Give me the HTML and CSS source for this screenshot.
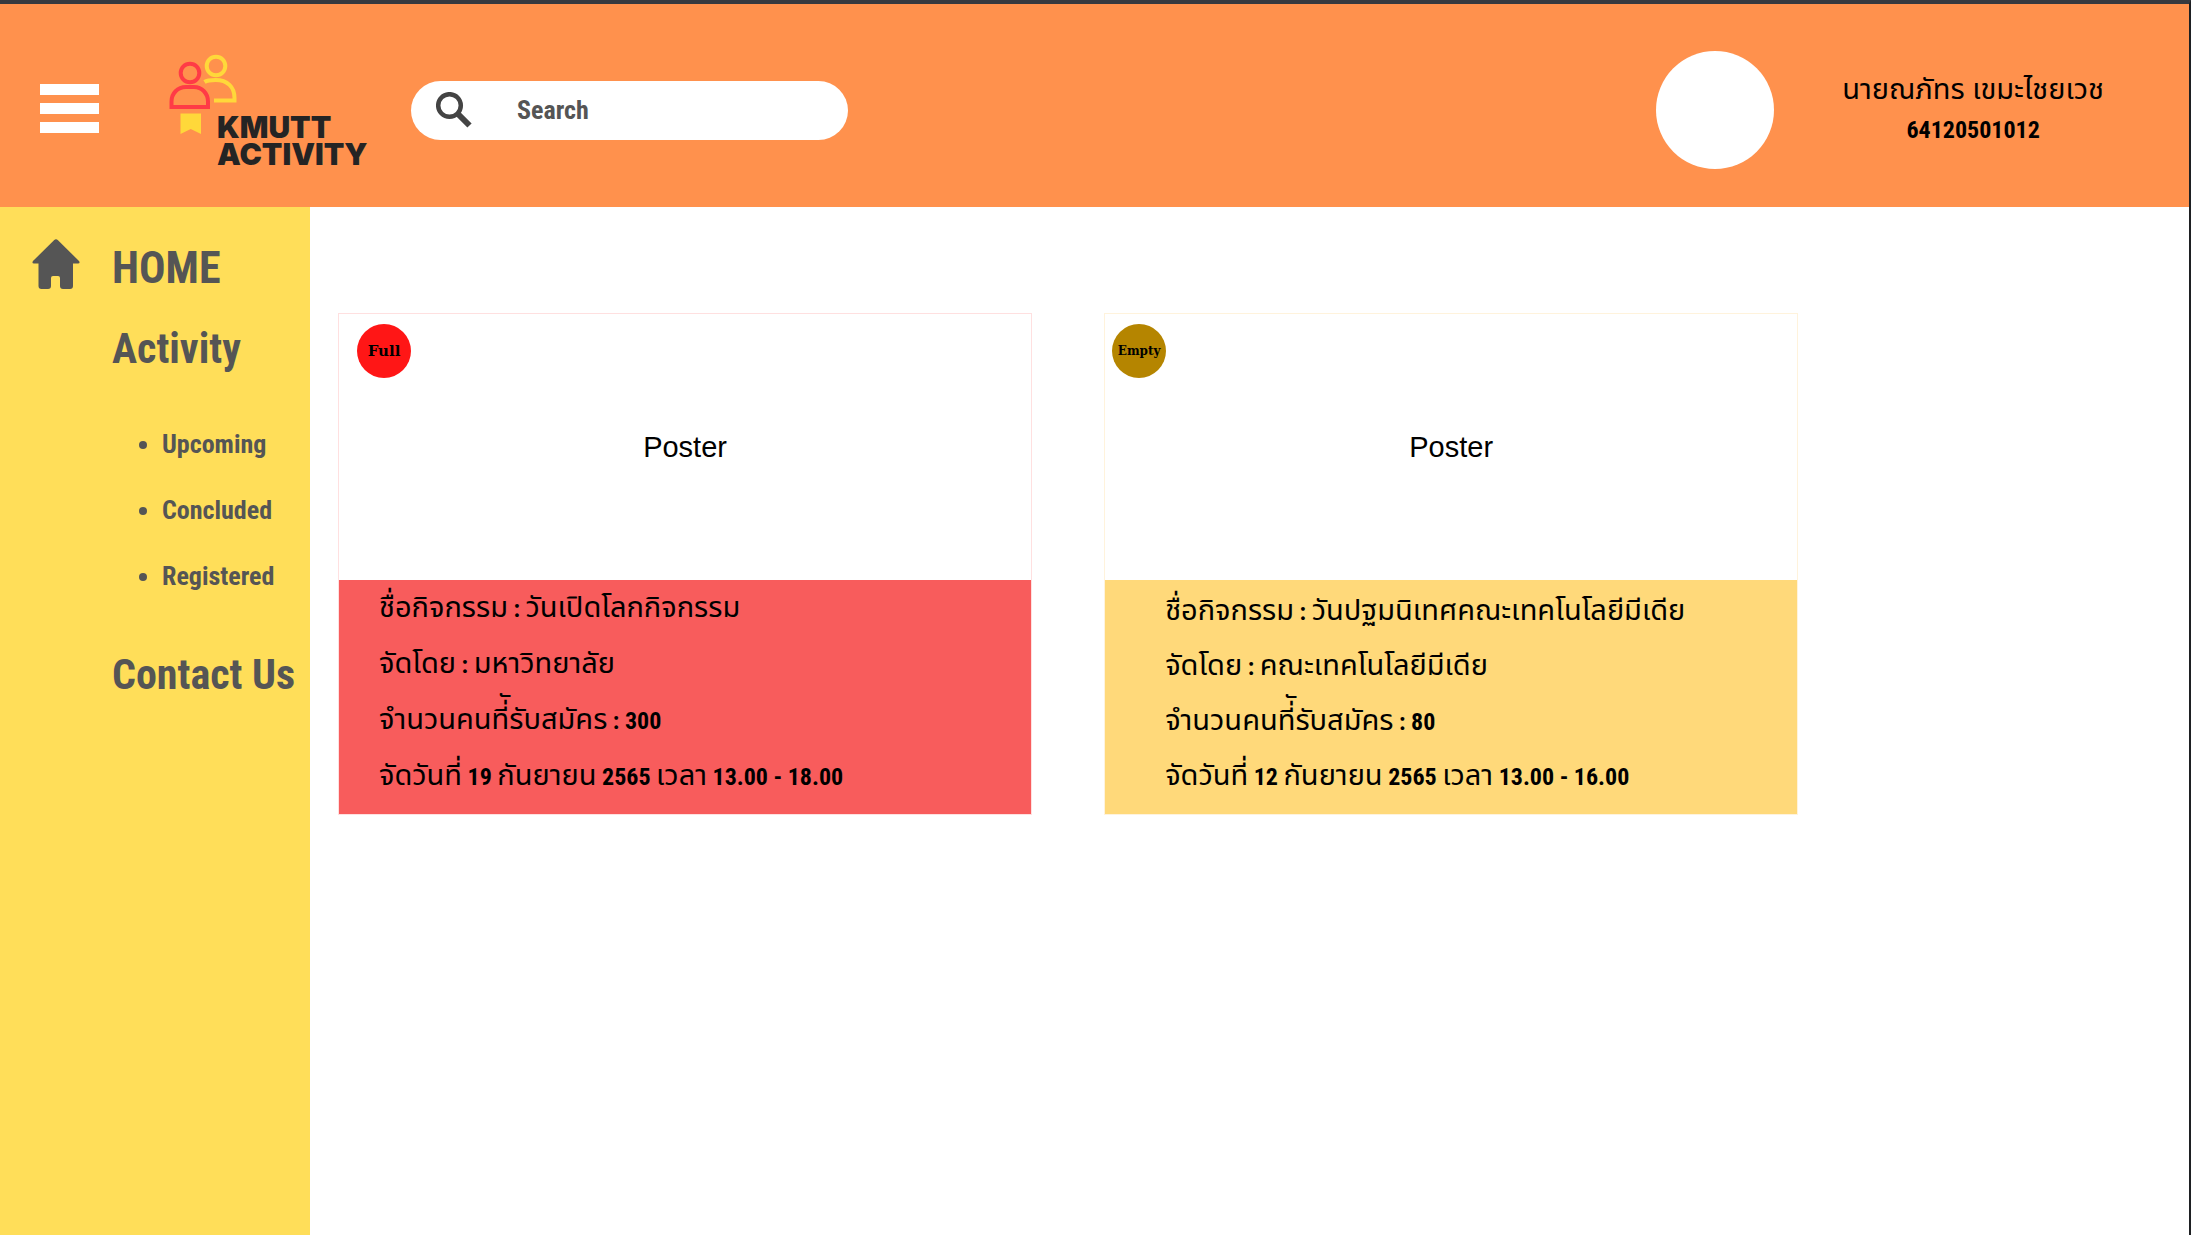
FILE: index.html
```html
<!DOCTYPE html>
<html lang="th">
<head>
<meta charset="utf-8">
<meta name="viewport" content="width=device-width, initial-scale=1">
<title>KMUTT Activity</title>
<link rel="stylesheet" href="styles.css">
</head>
<body>
<div class="app">
  <header class="header">
    <button class="menu" type="button" aria-label="Menu"><span></span><span></span><span></span></button>
    <a class="logo" href="#" aria-label="KMUTT Activity">
      <svg class="logo-mark" viewBox="0 0 70 82" fill="none" aria-hidden="true">
        <g stroke="#ffd83a" stroke-width="4">
          <circle cx="47" cy="12" r="9.3"/>
          <path d="M35.500 28c3-2 6-2 11-2 12 0 19 7 19 18v2.500H45"/>
        </g>
        <g stroke="#ff3b46" stroke-width="4">
          <circle cx="21" cy="19" r="9.300"/>
          <path d="M2.500 53v-5.500c0-8 6-14.500 14.500-14.500h8c8 0 14 6.500 14 14.500v5.500z"/>
        </g>
        <path fill="#ffd83a" d="M11.500 59.500h20.500v20.500l-10.250-5-10.250 5z"/>
      </svg>
      <span class="logo-text">KMUTT<br>ACTIVITY</span>
    </a>
    <form class="search" role="search">
      <svg class="search-icon" viewBox="0 0 36 36" fill="none" stroke="#444" aria-hidden="true">
        <circle cx="13.500" cy="13.500" r="11.300" stroke-width="4.500"/>
        <path d="M21.500 21.500L33.500 33.500" stroke-width="6"/>
      </svg>
      <input class="search-input" type="search" placeholder="Search" aria-label="Search">
    </form>
    <div class="user">
      <span class="avatar"></span>
      <div class="user-info">
        <span>นายณภัทร เขมะไชยเวช</span>
        <b>64120501012</b>
      </div>
    </div>
  </header>
  <div class="body">
    <nav class="sidebar">
      <a class="nav-main nav-home" href="#">
        <svg class="home-icon" viewBox="0 0 48 50" aria-hidden="true"><path fill="#555" d="M22 1.200q2-2 4 0L47 22q1.500 2.500-1 2.500h-5V47q0 3-3 3h-7q-3 0-3-3v-8q0-2-2-2h-5q-2 0-2 2v8q0 3-3 3H9.500q-3 0-3-3V24.500H2Q-.5 24.500 1 22z"/></svg>
        HOME
      </a>
      <a class="nav-main" href="#">Activity</a>
      <ul class="nav-sub">
        <li><a href="#">Upcoming</a></li>
        <li><a href="#">Concluded</a></li>
        <li><a href="#">Registered</a></li>
      </ul>
      <a class="nav-main" href="#">Contact Us</a>
    </nav>
    <main class="cards">
      <article class="card card-full">
        <div class="poster"><span class="badge">Full</span>Poster</div>
        <div class="info">
          <p>ชื่อกิจกรรม<b> : </b>วันเปิดโลกกิจกรรม</p>
          <p>จัดโดย<b> : </b>มหาวิทยาลัย</p>
          <p>จำนวนคนที่ัรับสมัคร<b> : 300</b></p>
          <p>จัดวันที่<b> 19 </b>กันยายน<b> 2565 </b>เวลา<b> 13.00 - 18.00</b></p>
        </div>
      </article>
      <article class="card card-empty">
        <div class="poster"><span class="badge">Empty</span>Poster</div>
        <div class="info">
          <p>ชื่อกิจกรรม<b> : </b>วันปฐมนิเทศคณะเทคโนโลยีมีเดีย</p>
          <p>จัดโดย<b> : </b>คณะเทคโนโลยีมีเดีย</p>
          <p>จำนวนคนที่ัรับสมัคร<b> : 80</b></p>
          <p>จัดวันที่<b> 12 </b>กันยายน<b> 2565 </b>เวลา<b> 13.00 - 16.00</b></p>
        </div>
      </article>
    </main>
  </div>
</div>
</body>
</html>
```
FILE: styles.css
```css
* { box-sizing: border-box; }

body {
  margin: 0;
  color: #000;
  background: #fff;
  font-family: "Noto Sans Thai", "Noto Sans", sans-serif;
  font-size: 29px;
}

a { color: inherit; text-decoration: none; }

b, .sidebar, .search-input {
  font-family: "Roboto Condensed", "Liberation Sans Narrow", sans-serif;
  font-weight: 700;
}

b { font-size: 24px; }

.app {
  display: flex;
  flex-direction: column;
  min-height: 100vh;
  border-top: 4px solid #36393f;
  border-right: 2px solid #1e2023;
}

.header {
  display: flex;
  align-items: center;
  height: 203px;
  padding: 9px 40px 0;
  background: #ff914d;
}

.menu {
  display: flex;
  flex-direction: column;
  justify-content: space-between;
  width: 59px;
  height: 49px;
  margin-bottom: 4px;
  padding: 0;
  border: 0;
  background: none;
}

.menu span { height: 11px; background: #fff; }

.logo {
  display: flex;
  width: 242px;
  height: 112px;
  margin: 0 0 0 70px;
}

.logo-mark { flex: none; width: 70px; height: 82px; }

.logo-text {
  margin: 60px 0 0 -22px;
  color: #242424;
  font: 900 30px/27px Inter, sans-serif;
}

.search {
  display: flex;
  align-items: center;
  width: 437px;
  height: 59px;
  padding: 0 25px;
  border-radius: 30px;
  background: #fff;
}

.search-icon { flex: none; width: 36px; height: 36px; }

.search-input {
  flex: 1;
  min-width: 0;
  margin-left: 45px;
  padding: 0;
  border: 0;
  outline: 0;
  background: none;
  color: #555;
  font-size: 26px;
}

.search-input::placeholder { color: #555; opacity: 1; }

.user {
  display: flex;
  align-items: center;
  gap: 68px;
  margin-left: auto;
  margin-right: 45px;
}

.avatar { width: 118px; height: 118px; border-radius: 50%; background: #fff; }

.user-info {
  display: flex;
  flex-direction: column;
  align-items: center;
  line-height: 40px;
  white-space: nowrap;
}

.body { display: flex; flex: 1; }

.sidebar {
  flex: none;
  width: 310px;
  padding: 32px 0 0 32px;
  background: #ffde59;
  color: #555;
}

.nav-main {
  display: block;
  padding-left: 80px;
  font-size: 42px;
  line-height: 48px;
  margin-bottom: 38px;
  white-space: nowrap;
}

.nav-home {
  display: flex;
  gap: 32px;
  padding-left: 0;
  margin-bottom: 28px;
  font-size: 44px;
  line-height: 58px;
}

.home-icon { width: 48px; height: 50px; }

.nav-sub {
  margin: 0 0 42px;
  padding-left: 130px;
  font-size: 26px;
  line-height: 66px;
}

.cards {
  flex: 1;
  display: grid;
  grid-template-columns: repeat(2, 37.5%);
  align-content: start;
  gap: 72px;
  padding: 106px 0 40px 28px;
}

.card { border: 1px solid #ffe0e0; }
.card-empty { border-color: #fff3dc; }

.poster {
  position: relative;
  display: flex;
  align-items: center;
  justify-content: center;
  height: 266px;
  font-family: "Liberation Sans", Arial, sans-serif;
}

.badge {
  position: absolute;
  top: 10px;
  left: 18px;
  width: 54px;
  height: 54px;
  border-radius: 50%;
  background: #ff1616;
  font: 700 15px/54px "DejaVu Serif", serif;
  text-align: center;
}

.card-empty .badge { left: 7px; background: #b58500; font-size: 12px; }

.info { padding: 0 0 10px 40px; background: #f85c5c; line-height: 56px; white-space: nowrap; }
.card-empty .info { padding: 4px 0 10px 60px; background: #ffd97a; line-height: 55px; }

.info p { margin: 0; }
.info b { line-height: 1; }
```
